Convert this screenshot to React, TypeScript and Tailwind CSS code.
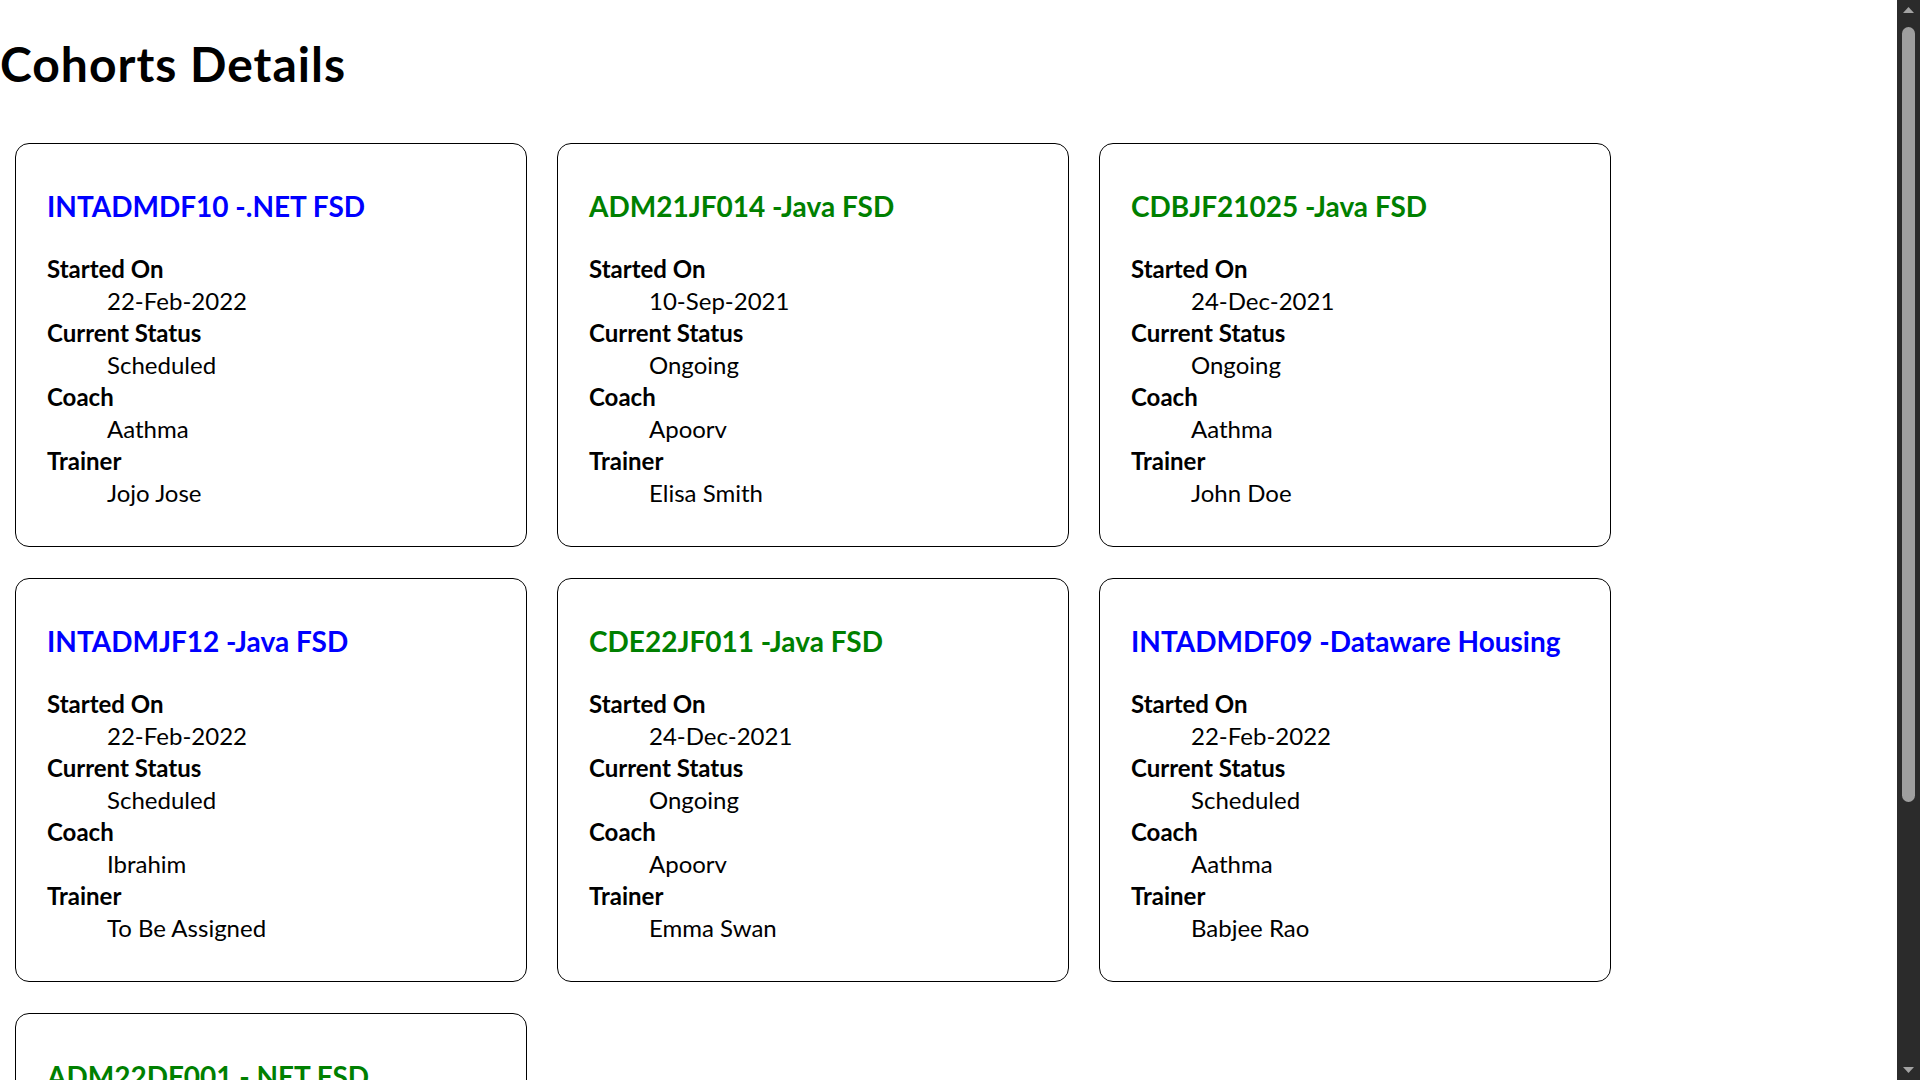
const cohorts = [
  { code: "INTADMDF10", tech: ".NET FSD", startDate: "22-Feb-2022", status: "Scheduled", coach: "Aathma", trainer: "Jojo Jose" },
  { code: "ADM21JF014", tech: "Java FSD", startDate: "10-Sep-2021", status: "Ongoing", coach: "Apoorv", trainer: "Elisa Smith" },
  { code: "CDBJF21025", tech: "Java FSD", startDate: "24-Dec-2021", status: "Ongoing", coach: "Aathma", trainer: "John Doe" },
  { code: "INTADMJF12", tech: "Java FSD", startDate: "22-Feb-2022", status: "Scheduled", coach: "Ibrahim", trainer: "To Be Assigned" },
  { code: "CDE22JF011", tech: "Java FSD", startDate: "24-Dec-2021", status: "Ongoing", coach: "Apoorv", trainer: "Emma Swan" },
  { code: "INTADMDF09", tech: "Dataware Housing", startDate: "22-Feb-2022", status: "Scheduled", coach: "Aathma", trainer: "Babjee Rao" },
  { code: "ADM22DF001", tech: ".NET FSD", startDate: "10-Jan-2022", status: "Ongoing", coach: "Ibrahim", trainer: "Jojo Jose" },
];

type Cohort = (typeof cohorts)[number];

function CohortCard({ cohort }: { cohort: Cohort }) {
  const titleColor = cohort.status === "Scheduled" ? "text-[#0000ff]" : "text-[#008000]";

  return (
    <div className="w-[512px] rounded-[14px] border border-black px-[31px] pt-[44px] pb-[37px]">
      <h3 className={`whitespace-nowrap text-[28px] font-bold leading-[37px] ${titleColor}`}>
        {cohort.code} -{cohort.tech}
      </h3>
      <dl className="mt-[28px] text-[24px] leading-[32px] text-black">
        <dt className="font-bold">Started On</dt>
        <dd className="ml-[60px]">{cohort.startDate}</dd>
        <dt className="font-bold">Current Status</dt>
        <dd className="ml-[60px]">{cohort.status}</dd>
        <dt className="font-bold">Coach</dt>
        <dd className="ml-[60px]">{cohort.coach}</dd>
        <dt className="font-bold">Trainer</dt>
        <dd className="ml-[60px]">{cohort.trainer}</dd>
      </dl>
    </div>
  );
}

// browser scrollbar as it appears in the screenshot
function Scrollbar() {
  return (
    <div className="fixed right-0 top-0 flex h-screen w-[23px] flex-col items-center bg-[#2b2b2b]">
      <svg width="13" height="23" viewBox="0 0 13 23" className="shrink-0">
        <path d="M1 13 L6.5 7 L12 13 Z" fill="#a3a3a3" />
      </svg>
      <div className="mt-[4px] h-[775px] w-[13px] rounded-full bg-[#9f9f9f]" />
      <div className="flex-1" />
      <svg width="13" height="23" viewBox="0 0 13 23" className="shrink-0">
        <path d="M1 10 L6.5 16 L12 10 Z" fill="#a3a3a3" />
      </svg>
    </div>
  );
}

export default function App() {
  return (
    <div className="min-h-screen bg-white font-['Lato',sans-serif] text-black">
      <h1 className="pt-[32px] text-[48px] font-bold leading-[64px] tracking-[1px]">Cohorts Details</h1>

      {/* Cohort cards */}
      <div className="mt-[47px] flex flex-wrap gap-x-[30px] gap-y-[31px] px-[15px] pb-[24px]">
        {cohorts.map((c) => (
          <CohortCard key={c.code} cohort={c} />
        ))}
      </div>

      <Scrollbar />
    </div>
  );
}
